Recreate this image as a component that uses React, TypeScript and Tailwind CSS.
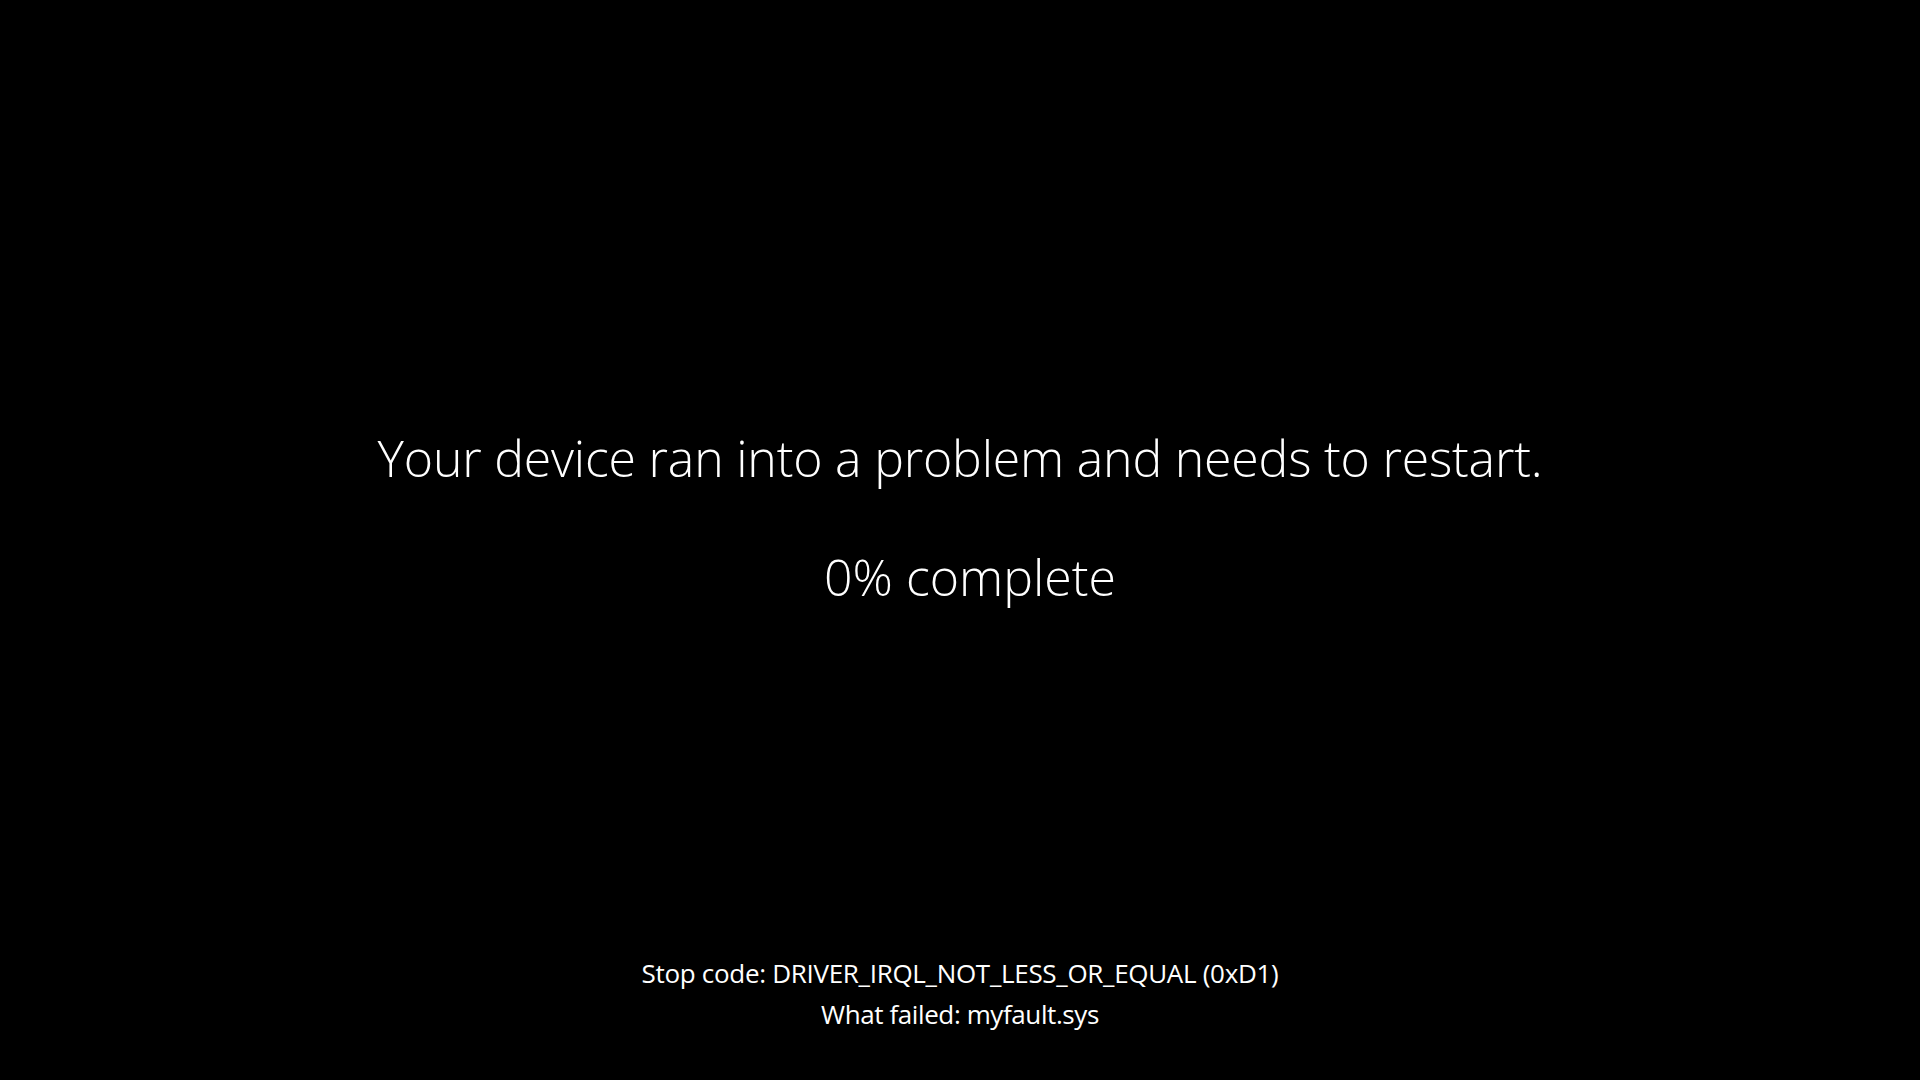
import React from "react";

export default function App() {
  return (
    <div
      className="flex h-screen w-full flex-col items-center bg-black text-white"
      style={{ fontFamily: '"Open Sans", "Segoe UI", sans-serif' }}
    >
      <div className="mt-[424px] text-[50px] font-light leading-[68px] tracking-[-0.2px]">
        Your device ran into a problem and needs to restart.
      </div>
      <div className="ml-[20px] mt-[51px] text-[50px] font-light leading-[68px]">0% complete</div>
      <div className="mt-[342px] text-[26px] leading-[41px] tracking-[-0.3px]">
        Stop code: DRIVER_IRQL_NOT_LESS_OR_EQUAL (0xD1)
      </div>
      <div className="text-[26px] leading-[41px] tracking-[-0.4px]">What failed: myfault.sys</div>
    </div>
  );
}
